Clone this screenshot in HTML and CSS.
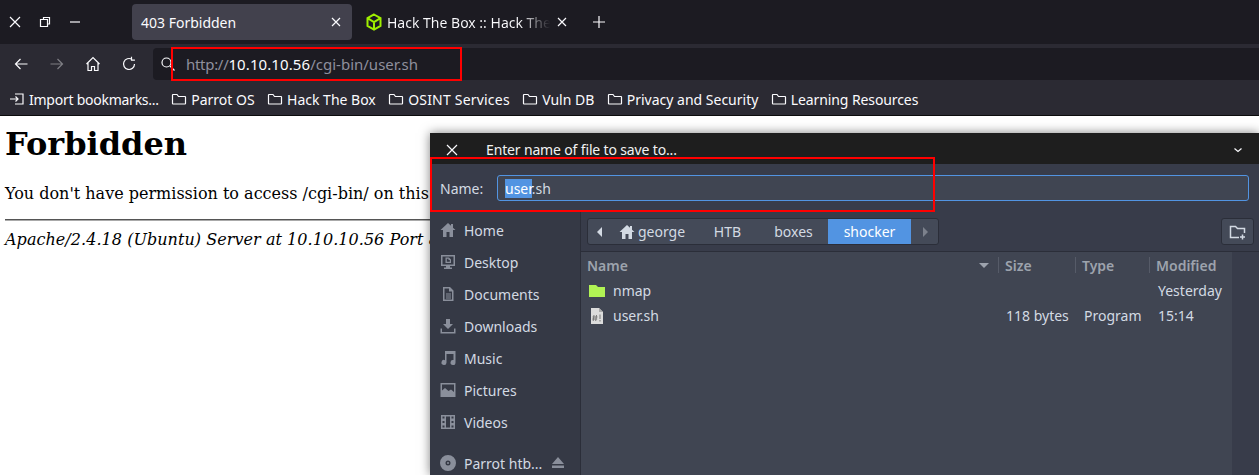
FILE: index.html
```html
<!DOCTYPE html>
<html>
	<head>
		<title>403 Forbidden</title>
		<meta charset="utf-8"/>
		<link rel="stylesheet" href="styles.css">
	</head>
	<body>
		<div class="browser">
			<div class="tabbar">
				<div class="wincontrols">
					<svg class="icon" width="16" height="16" viewBox="0 0 16 16"><path d="M3 3l10 10M13 3L3 13" class="line"/></svg>
					<svg class="icon" width="16" height="16" viewBox="0 0 16 16"><path d="M6.500 5V3.500h6v6.500H11M3.500 5.500h7v7h-7z" class="line"/></svg>
					<svg class="icon" width="16" height="16" viewBox="0 0 16 16"><path d="M3 8h10" class="line"/></svg>
				</div>
				<div class="tab tab-active">
					<span class="tab-title">403 Forbidden</span>
					<svg class="tab-close" width="10" height="10" viewBox="0 0 10 10"><path d="M1 1l8 8M9 1L1 9" class="line"/></svg>
				</div>
				<div class="tab">
					<svg class="tab-icon" width="16" height="18" viewBox="0 0 16 18"><path d="M8 1.500l6.500 3.700v7.600L8 16.500l-6.500-3.700V5.200zM1.500 5.200L8 9l6.500-3.800M8 9v7.500" fill="none" stroke="#9fef00" stroke-width="2"/></svg>
					<span class="tab-title tab-fade">Hack The Box :: Hack The</span>
					<svg class="tab-close" width="10" height="10" viewBox="0 0 10 10"><path d="M1 1l8 8M9 1L1 9" class="line"/></svg>
				</div>
				<svg class="newtab" width="16" height="16" viewBox="0 0 16 16"><path d="M8 2v12M2 8h12" class="line"/></svg>
			</div>
			<div class="navbar">
				<svg class="icon" width="16" height="16" viewBox="0 0 16 16"><path d="M14.500 8H2.500M7.500 3l-5 5 5 5" class="line"/></svg>
				<svg class="icon dim" width="16" height="16" viewBox="0 0 16 16"><path d="M1.500 8h12M8.500 3l5 5-5 5" class="line"/></svg>
				<svg class="icon" width="16" height="16" viewBox="0 0 16 16"><path d="M1.500 8L8 1.500 14.500 8M3 6.500v8h3.500v-4h3v4H13v-8" class="line"/></svg>
				<svg class="icon" width="16" height="16" viewBox="0 0 16 16"><path d="M13.500 8A5.500 5.500 0 1 1 11 3.400M10.500 0.800v3.400h3.400" class="line"/></svg>
				<div class="urlbar">
					<svg width="16" height="16" viewBox="0 0 16 16"><circle cx="6.500" cy="6.500" r="4.500" class="line"/><path d="M10 10l4.500 4.500" class="line"/></svg>
					<span class="url"><i>http://</i><b>10.10.10.56</b>/cgi-bin/user.sh</span>
				</div>
			</div>
			<div class="bookmarks">
				<span class="mark mark-import">
					<svg width="16" height="16" viewBox="0 0 16 16"><path d="M6 3h8v10H6M1 8h8M6.500 5.500L9 8l-2.500 2.500" class="line"/></svg>
					Import bookmarks...
				</span>
				<span class="mark"><svg width="16" height="16" viewBox="0 0 16 16"><use href="#folder"/></svg>Parrot OS</span>
				<span class="mark"><svg width="16" height="16" viewBox="0 0 16 16"><use href="#folder"/></svg>Hack The Box</span>
				<span class="mark mark-osint"><svg width="16" height="16" viewBox="0 0 16 16"><use href="#folder"/></svg>OSINT Services</span>
				<span class="mark"><svg width="16" height="16" viewBox="0 0 16 16"><use href="#folder"/></svg>Vuln DB</span>
				<span class="mark"><svg width="16" height="16" viewBox="0 0 16 16"><use href="#folder"/></svg>Privacy and Security</span>
				<span class="mark mark-learning"><svg width="16" height="16" viewBox="0 0 16 16"><use href="#folder"/></svg>Learning Resources</span>
			</div>
		</div>

		<div class="page">
			<h1>Forbidden</h1>
			<p>You don't have permission to access /cgi-bin/ on this server.</p>
			<hr>
			<address>Apache/2.4.18 (Ubuntu) Server at 10.10.10.56 Port 80</address>
		</div>

		<div class="dialog">
			<div class="dialog-title">
				<svg width="14" height="14" viewBox="0 0 14 14"><path d="M2 2l10 10M12 2L2 12" class="line"/></svg>
				<span class="dialog-name">Enter name of file to save to...</span>
				<svg class="dialog-menu" width="10" height="6" viewBox="0 0 10 6"><path d="M1.500 1.500L5 4.500l3.500-3" class="line"/></svg>
			</div>
			<div class="namerow">
				<label>Name:</label>
				<div class="nameinput"><span class="sel">user</span>.sh</div>
			</div>
			<div class="dialog-body">
				<div class="sidebar">
					<div class="place">
						<svg width="16" height="16" viewBox="0 0 16 16"><path class="fillicon" d="M8 1L0.500 8H3v7h3.500v-5h3v5H13V8h2.500L13 5.700V2h-2v1.800z"/></svg>
						Home
					</div>
					<div class="place">
						<svg width="16" height="16" viewBox="0 0 16 16"><path class="fillicon" fill-rule="evenodd" d="M1 1h14v11H10v1.500h2V15H4v-1.500h2V12H1zM2.500 2.500v8h11v-8zM5.500 3.500h3.500l2 2v3.500H5.500zM6.800 4.800v3h3V6H8.500V4.800z"/></svg>
						Desktop
					</div>
					<div class="place">
						<svg width="16" height="16" viewBox="0 0 16 16"><path class="fillicon" fill-rule="evenodd" d="M3 1h7l3.500 3.500V15H3zM4.500 2.500v11h7.500V5.500H9v-3zM6 7.500h5v1H6zM6 9.500h5v1H6zM6 11.500h5v1H6z"/></svg>
						Documents
					</div>
					<div class="place">
						<svg width="16" height="16" viewBox="0 0 16 16"><path class="fillicon" d="M6 1h4v5h3l-5 5-5-5h3zM0.500 10.500H2V14h12v-3.500h1.500V15.500H0.500z"/></svg>
						Downloads
					</div>
					<div class="place">
						<svg width="16" height="16" viewBox="0 0 16 16"><path class="fillicon" d="M5 1h10.500v11.500a2.500 2.500 0 1 1-2-2.400V4H6.500v8.500a2.500 2.500 0 1 1-1.500-2.300z"/></svg>
						Music
					</div>
					<div class="place">
						<svg width="16" height="16" viewBox="0 0 16 16"><path class="fillicon" fill-rule="evenodd" d="M0.500 1h15v14H0.500zM2 2.500v6l3-2.500 3.500 3 2.500-1.500 3 2.500V2.500z"/></svg>
						Pictures
					</div>
					<div class="place">
						<svg width="16" height="16" viewBox="0 0 16 16"><path class="fillicon" fill-rule="evenodd" d="M1 1h14v14H1zM2.500 2.500v2h2v-2zM11.500 2.500v2h2v-2zM2.500 7v2h2V7zM11.500 7v2h2V7zM2.500 11.500v2h2v-2zM11.500 11.500v2h2v-2zM6 2.500v11h4v-11z"/></svg>
						Videos
					</div>
					<div class="place place-device">
						<svg width="16" height="16" viewBox="0 0 16 16"><path class="fillicon" fill-rule="evenodd" d="M8 0a8 8 0 1 1 0 16A8 8 0 0 1 8 0zM8 5.500a2.500 2.500 0 1 0 0 5 2.500 2.500 0 0 0 0-5zM8 7a1 1 0 1 1 0 2 1 1 0 0 1 0-2z"/></svg>
						<span class="device-name">Parrot htb...</span>
						<svg width="14" height="12" viewBox="0 0 14 12"><path class="fillicon" d="M7 0l6 7H1zM1 8.500h12V11H1z"/></svg>
					</div>
				</div>
				<div class="filepane">
					<div class="pathrow">
						<div class="pathbar">
							<span class="seg seg-arrow"><svg width="6" height="10" viewBox="0 0 6 10"><path d="M5 0v10L0 5z" fill="#d3dae3"/></svg></span>
							<span class="seg seg-home"><svg width="16" height="16" viewBox="0 0 16 16"><path fill="#d3dae3" d="M8 1L0.500 8H3v7h3.500v-5h3v5H13V8h2.500L13 5.700V2h-2v1.800z"/></svg>george</span>
							<span class="seg seg-htb">HTB</span>
							<span class="seg seg-boxes">boxes</span>
							<span class="seg seg-active">shocker</span>
							<span class="seg seg-next"><svg width="6" height="10" viewBox="0 0 6 10"><path d="M1 0v10l5-5z" fill="#7c818c"/></svg></span>
						</div>
						<div class="newfolder">
							<svg width="18" height="16" viewBox="0 0 18 16"><path d="M10 13.500H1.500v-11h5l2 2h7V9M13.500 10.500v5M11 13h5" fill="none" stroke="#d3dae3" stroke-width="1.500"/></svg>
						</div>
					</div>
					<div class="filelist">
						<div class="listwrap">
							<div class="row head">
								<span class="col col-name">Name<svg width="10" height="5" viewBox="0 0 10 5"><path d="M0 0h10L5 5z" fill="#9da3ad"/></svg></span>
								<span class="col col-size">Size</span>
								<span class="col col-type">Type</span>
								<span class="col col-mod">Modified</span>
							</div>
							<div class="row">
								<span class="col col-name">
									<svg width="16" height="12" viewBox="0 0 16 12"><path d="M0 0h7l2 2h7v10H0z" fill="#b1f354"/></svg>
									nmap
								</span>
								<span class="col col-size"></span>
								<span class="col col-type"></span>
								<span class="col col-mod">Yesterday</span>
							</div>
							<div class="row row-file">
								<span class="col col-name">
									<svg width="16" height="16" viewBox="0 0 16 16"><path d="M2 0h8l4 4v12H2z" fill="#dcdcdc"/><path d="M10 0l4 4h-4z" fill="#a8a8a8"/><path d="M5 7l-.8 6M7.500 7l-.8 6M3.500 9h5M3.200 11h5M11 6.500v4.500M11 12v1.500" stroke="#777" stroke-width="1" fill="none"/></svg>
									user.sh
								</span>
								<span class="col col-size">118 bytes</span>
								<span class="col col-type">Program</span>
								<span class="col col-mod">15:14</span>
							</div>
						</div>
						<div class="scrollstrip"></div>
					</div>
				</div>
			</div>
		</div>

		<div class="annot annot-url"></div>
		<div class="annot annot-name"></div>

		<svg class="defs" width="0" height="0">
			<symbol id="folder" viewBox="0 0 16 16"><path d="M2 3.500h4l1.500 2h6.500a.5.5 0 0 1 .5.5v6.500a.5.5 0 0 1-.5.500H2a.5.5 0 0 1-.5-.5V4a.5.5 0 0 1 .5-.5z" fill="none" stroke="#fbfbfe" stroke-width="1.200"/></symbol>
		</svg>
	</body>
</html>
```

FILE: styles.css
```css
html,
body {
	margin: 0;
	padding: 0;
	height: 475px;
	overflow: hidden;
	background: #fff;
}

.line {
	fill: none;
	stroke: #fbfbfe;
	stroke-width: 1.2;
}

.defs {
	position: absolute;
}

/* browser chrome */
.browser {
	font-family: "Noto Sans", sans-serif;
	font-size: 14px;
	color: #fbfbfe;
	border-bottom: 1px solid #0c0c0d;
}

.tabbar {
	display: flex;
	align-items: center;
	height: 44px;
	background: #1c1b22;
}

.wincontrols {
	display: flex;
	gap: 14px;
	width: 132px;
	padding-left: 7px;
	box-sizing: border-box;
}

.tab {
	display: flex;
	align-items: center;
	width: 220px;
	height: 36px;
	margin-right: 6px;
	padding: 0 11px 0 9px;
	box-sizing: border-box;
	border-radius: 4px;
}

.tab-active {
	background: #42414d;
}

.tab-title {
	flex: 1;
	white-space: nowrap;
}

.tab-icon {
	margin-right: 5px;
	margin-left: -1px;
}

.tab-fade {
	color: transparent;
	background: linear-gradient(to right, #fbfbfe 78%, #1c1b22 96%);
	-webkit-background-clip: text;
	background-clip: text;
}

.newtab {
	margin-left: 7px;
}

.navbar {
	display: flex;
	align-items: center;
	gap: 20px;
	height: 36px;
	padding: 4px 0 0 13px;
	box-sizing: border-box;
	background: #2b2a33;
}

.dim {
	opacity: 0.4;
}

.urlbar {
	flex: 1;
	display: flex;
	align-items: center;
	gap: 10px;
	height: 32px;
	margin-left: -4px;
	padding-left: 7px;
	background: #1c1b22;
	border-radius: 4px 0 0 4px;
	font-size: 15px;
}

.url {
	color: #8f8f9d;
}

.url i {
	font-style: normal;
	letter-spacing: -0.3px;
}

.url b {
	font-weight: 400;
	color: #fbfbfe;
	letter-spacing: 0.1px;
}

.bookmarks {
	display: flex;
	align-items: center;
	gap: 12.4px;
	height: 35px;
	padding: 3px 0 0 9px;
	box-sizing: border-box;
	background: #2b2a33;
}

.mark {
	display: flex;
	align-items: center;
	gap: 4px;
	white-space: nowrap;
}

.mark-import {
	letter-spacing: -0.25px;
}

.mark-osint {
	letter-spacing: 0.2px;
}

.mark-learning {
	letter-spacing: -0.1px;
}

/* the 403 page */
.page {
	padding: 9px 5px 0;
	font-family: "DejaVu Serif", serif;
	font-size: 16px;
	color: #000;
}

h1 {
	margin: 0;
	font-size: 32px;
	line-height: 38px;
}

.page p {
	margin: 21px 0 16px;
	line-height: 19px;
}

hr {
	margin: 0 0 9px;
	border: 0;
	border-top: 1px solid #555;
	border-bottom: 1px solid #aaa;
}

address {
	line-height: 19px;
	letter-spacing: 0.05px;
}

/* save dialog */
.dialog {
	position: absolute;
	left: 430px;
	top: 133px;
	width: 829px;
	height: 342px;
	display: flex;
	flex-direction: column;
	font-family: "Noto Sans", sans-serif;
	font-size: 14px;
	color: #d3dae3;
	background: #383c4a;
	box-shadow: 0 0 10px rgba(0, 0, 0, 0.5);
}

.dialog-title {
	display: flex;
	align-items: center;
	height: 31px;
	padding: 2px 0 0 15px;
	box-sizing: border-box;
	background: #1e1e1e;
	color: #f2f2f2;
}

.dialog-name {
	flex: 1;
	margin-left: 27px;
	letter-spacing: -0.15px;
}

.dialog-menu {
	margin-right: 16px;
}

.namerow {
	display: flex;
	align-items: center;
	height: 48px;
	padding: 0 10px;
	box-sizing: border-box;
	background: #383c4a;
}

.namerow label {
	width: 57px;
}

.nameinput {
	flex: 1;
	height: 26px;
	line-height: 25px;
	padding: 0 7px;
	box-sizing: border-box;
	border: 1px solid #5294e2;
	border-radius: 3px;
	background: #404552;
}

.sel {
	background: #5294e2;
	color: #fff;
}

.dialog-body {
	flex: 1;
	display: flex;
	min-height: 0;
}

.sidebar {
	width: 151px;
	padding-top: 2px;
	box-sizing: border-box;
	background: #353945;
	border-right: 1px solid #2b2e39;
}

.place {
	display: flex;
	align-items: center;
	gap: 8px;
	height: 32px;
	padding-left: 10px;
}

.place-device {
	margin-top: 9px;
}

.device-name {
	width: 79px;
}

.fillicon {
	fill: #8a8f9b;
}

.filepane {
	flex: 1;
	display: flex;
	flex-direction: column;
	min-width: 0;
}

.pathrow {
	display: flex;
	justify-content: space-between;
	height: 40px;
	padding: 6px 5px 0 6px;
	box-sizing: border-box;
	background: #383c4a;
	border-bottom: 1px solid #2b2e39;
}

.pathbar {
	display: flex;
	height: 27px;
	border: 1px solid #2b2e39;
	border-radius: 3px;
	background: #444a58;
	box-sizing: border-box;
}

.seg {
	display: flex;
	align-items: center;
	justify-content: center;
	box-sizing: border-box;
}

.seg-arrow { width: 24px; }
.seg-home { width: 84px; gap: 3px; justify-content: flex-start; padding-left: 7px; }
.seg-htb { width: 63px; }
.seg-boxes { width: 69px; }
.seg-active { width: 83px; background: #5294e2; color: #fff; }
.seg-next { width: 27px; }

.newfolder {
	display: flex;
	align-items: center;
	justify-content: center;
	width: 33px;
	height: 27px;
	border: 1px solid #2b2e39;
	border-radius: 3px;
	background: #444a58;
	box-sizing: border-box;
}

.filelist {
	flex: 1;
	display: flex;
	background: #404552;
}

.listwrap {
	width: 651px;
}

.scrollstrip {
	flex: 1;
	background: #383c4a;
}

.row {
	display: flex;
	align-items: center;
	height: 25px;
}

.head {
	height: 26px;
	color: #9da3ad;
	font-weight: 600;
}

.col {
	display: flex;
	align-items: center;
	box-sizing: border-box;
	padding-left: 7px;
	white-space: nowrap;
}

.col-name { width: 417px; padding-left: 8px; gap: 8px; }
.col-size { width: 77px; }
.col-type { width: 74px; }
.col-mod { flex: 1; padding-left: 9px; }

.head .col-name { justify-content: space-between; padding-left: 6px; padding-right: 9px; }
.head .col-size,
.head .col-type,
.head .col-mod { border-left: 1px solid #565b68; padding-left: 6px; height: 16px; }

.row-file .col-size { padding-left: 8px; }
.row-file .col-type { padding-left: 9px; }

/* red marks drawn on the screenshot */
.annot {
	position: absolute;
	box-sizing: border-box;
	border: 2px solid #f00;
}

.annot-url {
	left: 171px;
	top: 47px;
	width: 291px;
	height: 34px;
}

.annot-name {
	left: 430px;
	top: 157px;
	width: 505px;
	height: 55px;
}
```
